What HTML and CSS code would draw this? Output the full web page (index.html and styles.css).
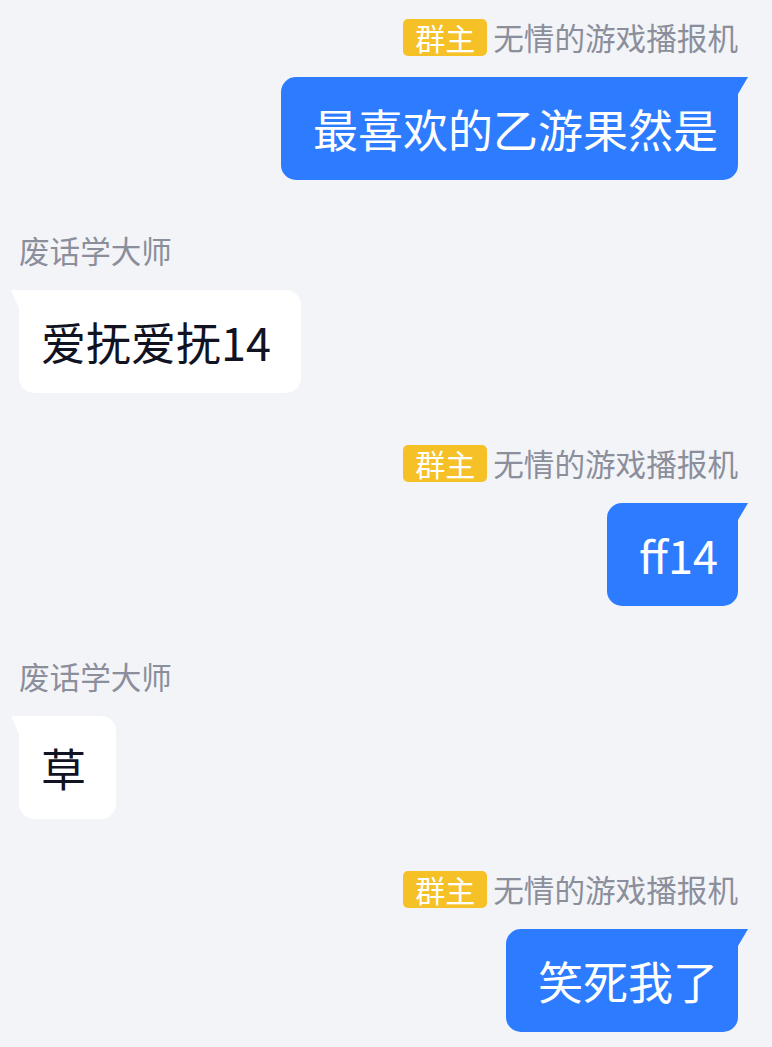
FILE: index.html
```html
<!DOCTYPE html>
<html lang="zh-CN">
  <head>
    <meta charset="UTF-8" />
    <meta name="viewport" content="width=device-width, initial-scale=1.0" />
    <title>群聊</title>
    <link rel="stylesheet" href="styles.css">
  </head>
  <body>
    <div class="chat">
      <div class="msg mine">
        <div class="sender">
          <span class="badge">群主</span>
          <span class="name">无情的游戏播报机</span>
        </div>
        <div class="bubble">最喜欢的乙游果然是</div>
      </div>

      <div class="msg theirs">
        <div class="sender">
          <span class="name">废话学大师</span>
        </div>
        <div class="bubble">爱抚爱抚14</div>
      </div>

      <div class="msg mine">
        <div class="sender">
          <span class="badge">群主</span>
          <span class="name">无情的游戏播报机</span>
        </div>
        <div class="bubble">ff14</div>
      </div>

      <div class="msg theirs">
        <div class="sender">
          <span class="name">废话学大师</span>
        </div>
        <div class="bubble">草</div>
      </div>

      <div class="msg mine">
        <div class="sender">
          <span class="badge">群主</span>
          <span class="name">无情的游戏播报机</span>
        </div>
        <div class="bubble">笑死我了</div>
      </div>
    </div>
  </body>
</html>
```

FILE: styles.css
```css
body {
  margin: 0;
  background-color: #f3f4f8;
  font-family: "Noto Sans CJK SC", "Noto Sans", sans-serif;
}

.chat {
  display: flex;
  flex-direction: column;
  padding: 19px 34px 0 19px;
}

.msg {
  display: flex;
  flex-direction: column;
  margin-bottom: 52px;
}

.mine {
  align-items: flex-end;
}

.theirs {
  align-items: flex-start;
}

.sender {
  display: flex;
  align-items: center;
  gap: 6px;
  height: 37px;
}

.name {
  color: #8b8e9b;
  font-size: 30.6px;
  line-height: 37px;
}

.badge {
  background-color: #f5c126;
  color: #fff;
  font-size: 30px;
  line-height: 37px;
  padding: 0 12px;
  border-radius: 5px;
}

.bubble {
  position: relative;
  margin-top: 21px;
  font-size: 45px;
  line-height: 63px;
  padding: 20px;
  border-radius: 15px;
}

.mine .bubble {
  background-color: #2d7cff;
  color: #fff;
  padding-left: 32px;
  border-top-right-radius: 0;
}

.mine .bubble::after {
  content: "";
  position: absolute;
  top: 0;
  right: -10px;
  width: 10px;
  height: 17px;
  background-color: #2d7cff;
  clip-path: polygon(0 0, 100% 0, 0 100%);
}

.theirs .bubble {
  background-color: #fff;
  color: #111322;
  padding-left: 22px;
  padding-right: 30px;
  border-top-left-radius: 0;
}

.theirs .bubble::before {
  content: "";
  position: absolute;
  top: 0;
  left: -8px;
  width: 8px;
  height: 18px;
  background-color: #fff;
  clip-path: polygon(0 0, 100% 0, 100% 100%);
}
```
